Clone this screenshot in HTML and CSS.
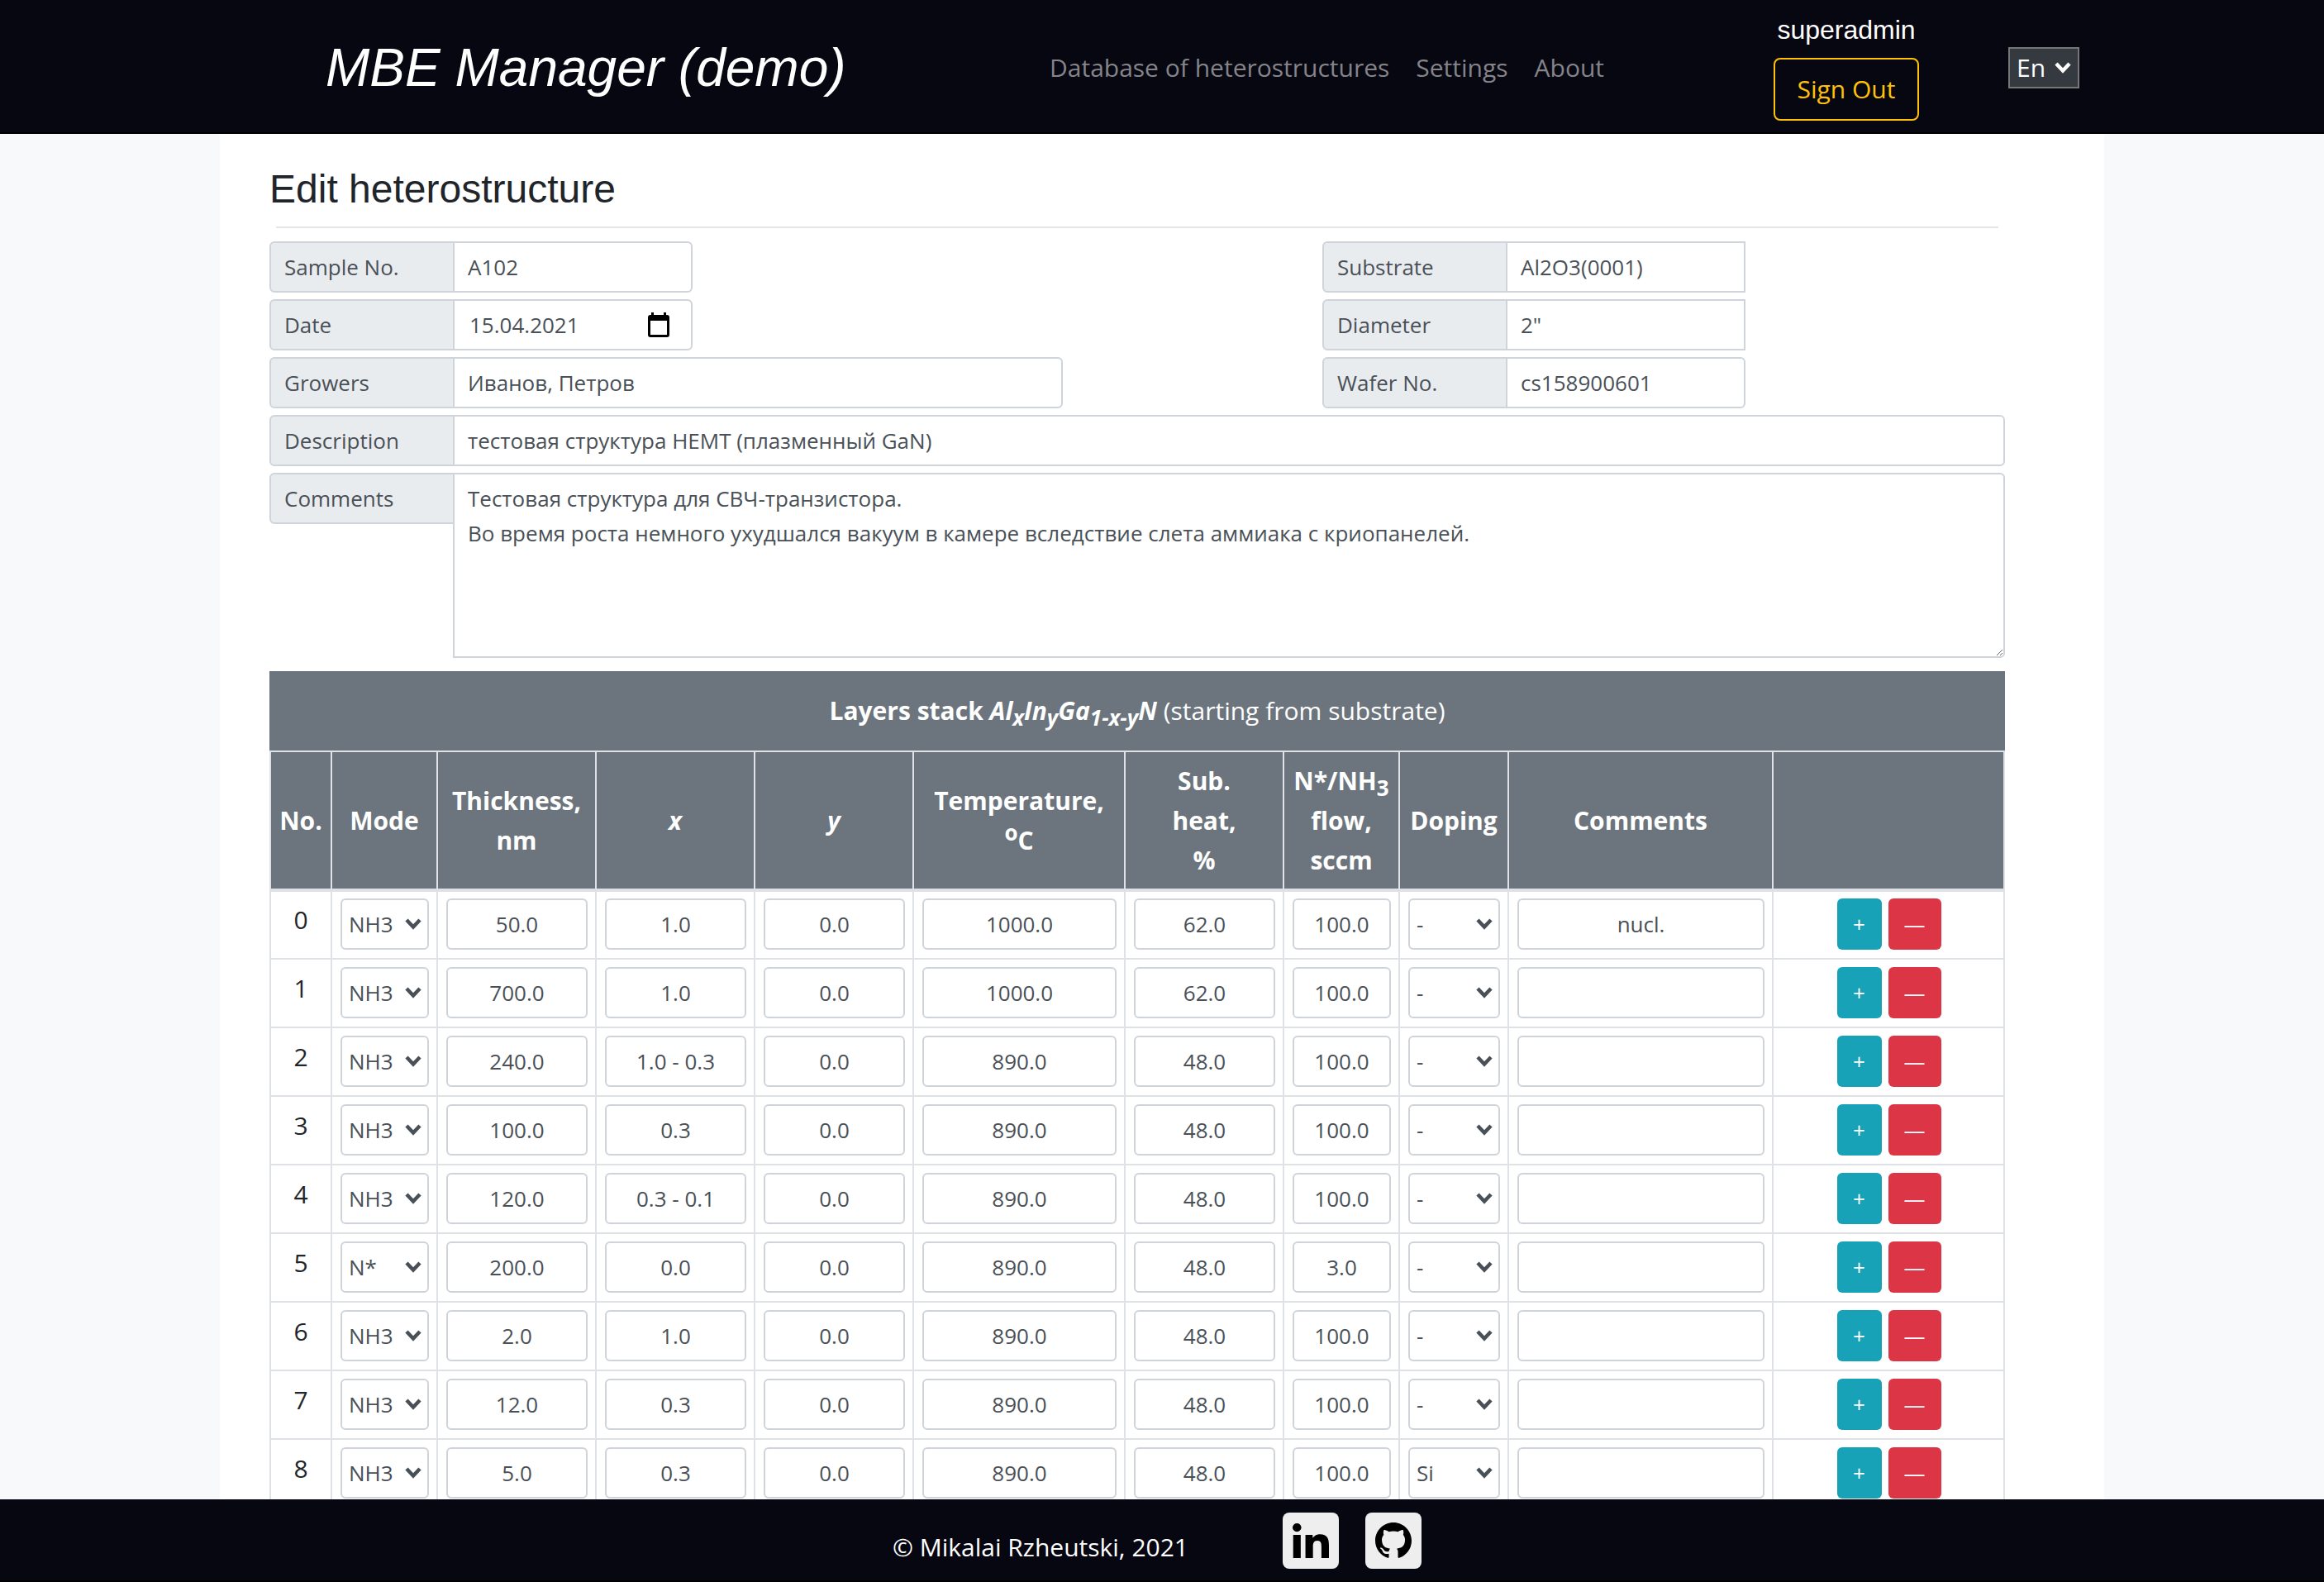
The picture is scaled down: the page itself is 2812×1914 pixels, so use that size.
FILE: index.html
```html
<!DOCTYPE html>
<html lang="en">
<head>
<meta charset="utf-8">
<title>MBE Manager (demo)</title>
<link rel="stylesheet" href="styles.css">
</head>
<body>
<header class="topbar">
  <div class="topbar-inner">
    <a class="brand" href="#">MBE Manager (demo)</a>
    <nav class="nav">
      <a href="#">Database of heterostructures</a>
      <a href="#">Settings</a>
      <a href="#">About</a>
    </nav>
    <div class="user">
      <span class="user-name">superadmin</span>
      <button class="sign-out" type="button">Sign Out</button>
    </div>
    <select class="lang" aria-label="Language"><option>En</option><option>Ru</option></select>
  </div>
</header>

<main class="page">
  <form class="sheet">
    <h1 class="title">Edit heterostructure</h1>
    <hr class="rule">

    <div class="fields">
      <div class="fields-left">
        <div class="group group-short"><label for="sample">Sample No.</label><input id="sample" type="text" value="A102"></div>
        <div class="group group-short">
          <label for="date">Date</label>
          <div class="date-box">
            <input id="date" type="text" value="15.04.2021">
            <button class="calendar" type="button" aria-label="Open calendar">
              <svg viewBox="0 0 26 30" width="26" height="30"><path fill-rule="evenodd" d="M4 0h3v3h12V0h3v3h1a3 3 0 0 1 3 3v21a3 3 0 0 1-3 3H3a3 3 0 0 1-3-3V6a3 3 0 0 1 3-3h1zM3 10v17h20V10z"/></svg>
            </button>
          </div>
        </div>
        <div class="group group-medium"><label for="growers">Growers</label><input id="growers" type="text" value="Иванов, Петров"></div>
      </div>
      <div class="fields-right">
        <div class="group group-short group-square"><label for="substrate">Substrate</label><input id="substrate" type="text" value="Al2O3(0001)"></div>
        <div class="group group-short group-square"><label for="diameter">Diameter</label><input id="diameter" type="text" value="2&quot;"></div>
        <div class="group group-short"><label for="wafer">Wafer No.</label><input id="wafer" type="text" value="cs158900601"></div>
      </div>
    </div>
    <div class="group"><label for="description">Description</label><input id="description" type="text" value="тестовая структура HEMT (плазменный GaN)"></div>
    <div class="group group-area"><label for="comments">Comments</label><textarea id="comments">Тестовая структура для СВЧ-транзистора.
Во время роста немного ухудшался вакуум в камере вследствие слета аммиака с криопанелей.</textarea></div>

    <table class="layers">
      <colgroup>
        <col class="c-no"><col class="c-mode"><col class="c-num"><col class="c-num"><col class="c-num"><col class="c-temp"><col class="c-num"><col class="c-flow"><col class="c-doping"><col class="c-comment"><col>
      </colgroup>
      <thead>
        <tr class="stack"><th colspan="11">Layers stack <i>Al<sub>x</sub>In<sub>y</sub>Ga<sub>1-x-y</sub>N</i> <span>(starting from substrate)</span></th></tr>
        <tr class="heads">
          <th>No.</th><th>Mode</th><th>Thickness,<br>nm</th><th><i>x</i></th><th><i>y</i></th><th>Temperature,<br><sup>o</sup>C</th><th>Sub.<br>heat,<br>%</th><th>N*/NH<sub>3</sub><br>flow,<br>sccm</th><th>Doping</th><th>Comments</th><th></th>
        </tr>
      </thead>
      <tbody>
        <tr>
          <td>0</td>
          <td><select aria-label="Mode"><option>NH3</option><option>N*</option></select></td>
          <td><input aria-label="Thickness" value="50.0"></td>
          <td><input aria-label="x" value="1.0"></td>
          <td><input aria-label="y" value="0.0"></td>
          <td><input aria-label="Temperature" value="1000.0"></td>
          <td><input aria-label="Substrate heat" value="62.0"></td>
          <td><input aria-label="Flow" value="100.0"></td>
          <td><select aria-label="Doping"><option>-</option><option>Si</option></select></td>
          <td><input aria-label="Comments" value="nucl."></td>
          <td><div class="actions"><button class="add" type="button">+</button><button class="remove" type="button">—</button></div></td>
        </tr>
        <tr>
          <td>1</td>
          <td><select aria-label="Mode"><option>NH3</option><option>N*</option></select></td>
          <td><input aria-label="Thickness" value="700.0"></td>
          <td><input aria-label="x" value="1.0"></td>
          <td><input aria-label="y" value="0.0"></td>
          <td><input aria-label="Temperature" value="1000.0"></td>
          <td><input aria-label="Substrate heat" value="62.0"></td>
          <td><input aria-label="Flow" value="100.0"></td>
          <td><select aria-label="Doping"><option>-</option><option>Si</option></select></td>
          <td><input aria-label="Comments" value=""></td>
          <td><div class="actions"><button class="add" type="button">+</button><button class="remove" type="button">—</button></div></td>
        </tr>
        <tr>
          <td>2</td>
          <td><select aria-label="Mode"><option>NH3</option><option>N*</option></select></td>
          <td><input aria-label="Thickness" value="240.0"></td>
          <td><input aria-label="x" value="1.0 - 0.3"></td>
          <td><input aria-label="y" value="0.0"></td>
          <td><input aria-label="Temperature" value="890.0"></td>
          <td><input aria-label="Substrate heat" value="48.0"></td>
          <td><input aria-label="Flow" value="100.0"></td>
          <td><select aria-label="Doping"><option>-</option><option>Si</option></select></td>
          <td><input aria-label="Comments" value=""></td>
          <td><div class="actions"><button class="add" type="button">+</button><button class="remove" type="button">—</button></div></td>
        </tr>
        <tr>
          <td>3</td>
          <td><select aria-label="Mode"><option>NH3</option><option>N*</option></select></td>
          <td><input aria-label="Thickness" value="100.0"></td>
          <td><input aria-label="x" value="0.3"></td>
          <td><input aria-label="y" value="0.0"></td>
          <td><input aria-label="Temperature" value="890.0"></td>
          <td><input aria-label="Substrate heat" value="48.0"></td>
          <td><input aria-label="Flow" value="100.0"></td>
          <td><select aria-label="Doping"><option>-</option><option>Si</option></select></td>
          <td><input aria-label="Comments" value=""></td>
          <td><div class="actions"><button class="add" type="button">+</button><button class="remove" type="button">—</button></div></td>
        </tr>
        <tr>
          <td>4</td>
          <td><select aria-label="Mode"><option>NH3</option><option>N*</option></select></td>
          <td><input aria-label="Thickness" value="120.0"></td>
          <td><input aria-label="x" value="0.3 - 0.1"></td>
          <td><input aria-label="y" value="0.0"></td>
          <td><input aria-label="Temperature" value="890.0"></td>
          <td><input aria-label="Substrate heat" value="48.0"></td>
          <td><input aria-label="Flow" value="100.0"></td>
          <td><select aria-label="Doping"><option>-</option><option>Si</option></select></td>
          <td><input aria-label="Comments" value=""></td>
          <td><div class="actions"><button class="add" type="button">+</button><button class="remove" type="button">—</button></div></td>
        </tr>
        <tr>
          <td>5</td>
          <td><select aria-label="Mode"><option>NH3</option><option selected>N*</option></select></td>
          <td><input aria-label="Thickness" value="200.0"></td>
          <td><input aria-label="x" value="0.0"></td>
          <td><input aria-label="y" value="0.0"></td>
          <td><input aria-label="Temperature" value="890.0"></td>
          <td><input aria-label="Substrate heat" value="48.0"></td>
          <td><input aria-label="Flow" value="3.0"></td>
          <td><select aria-label="Doping"><option>-</option><option>Si</option></select></td>
          <td><input aria-label="Comments" value=""></td>
          <td><div class="actions"><button class="add" type="button">+</button><button class="remove" type="button">—</button></div></td>
        </tr>
        <tr>
          <td>6</td>
          <td><select aria-label="Mode"><option>NH3</option><option>N*</option></select></td>
          <td><input aria-label="Thickness" value="2.0"></td>
          <td><input aria-label="x" value="1.0"></td>
          <td><input aria-label="y" value="0.0"></td>
          <td><input aria-label="Temperature" value="890.0"></td>
          <td><input aria-label="Substrate heat" value="48.0"></td>
          <td><input aria-label="Flow" value="100.0"></td>
          <td><select aria-label="Doping"><option>-</option><option>Si</option></select></td>
          <td><input aria-label="Comments" value=""></td>
          <td><div class="actions"><button class="add" type="button">+</button><button class="remove" type="button">—</button></div></td>
        </tr>
        <tr>
          <td>7</td>
          <td><select aria-label="Mode"><option>NH3</option><option>N*</option></select></td>
          <td><input aria-label="Thickness" value="12.0"></td>
          <td><input aria-label="x" value="0.3"></td>
          <td><input aria-label="y" value="0.0"></td>
          <td><input aria-label="Temperature" value="890.0"></td>
          <td><input aria-label="Substrate heat" value="48.0"></td>
          <td><input aria-label="Flow" value="100.0"></td>
          <td><select aria-label="Doping"><option>-</option><option>Si</option></select></td>
          <td><input aria-label="Comments" value=""></td>
          <td><div class="actions"><button class="add" type="button">+</button><button class="remove" type="button">—</button></div></td>
        </tr>
        <tr>
          <td>8</td>
          <td><select aria-label="Mode"><option>NH3</option><option>N*</option></select></td>
          <td><input aria-label="Thickness" value="5.0"></td>
          <td><input aria-label="x" value="0.3"></td>
          <td><input aria-label="y" value="0.0"></td>
          <td><input aria-label="Temperature" value="890.0"></td>
          <td><input aria-label="Substrate heat" value="48.0"></td>
          <td><input aria-label="Flow" value="100.0"></td>
          <td><select aria-label="Doping"><option>-</option><option selected>Si</option></select></td>
          <td><input aria-label="Comments" value=""></td>
          <td><div class="actions"><button class="add" type="button">+</button><button class="remove" type="button">—</button></div></td>
        </tr>
      </tbody>
    </table>
  </form>
</main>

<footer class="footer">
  <span class="copyright">© Mikalai Rzheutski, 2021</span>
  <div class="social">
    <a href="#" aria-label="LinkedIn"><svg viewBox="0 0 448 448" width="44" height="42" preserveAspectRatio="none"><path d="M100.28 448H7.4V148.9h92.88zM53.79 108.1C24.09 108.1 0 83.5 0 53.8a53.79 53.79 0 0 1 107.58 0c0 29.7-24.1 54.3-53.79 54.3zM447.9 448h-92.68V302.4c0-34.7-.7-79.2-48.29-79.2-48.29 0-55.69 37.7-55.69 76.7V448h-92.78V148.9h89.08v40.8h1.3c12.4-23.5 42.69-48.3 87.88-48.3 94 0 111.28 61.9 111.28 142.3V448z"/></svg></a>
    <a href="#" aria-label="GitHub"><svg viewBox="0 0 16 16" width="44" height="44"><path d="M8 0C3.58 0 0 3.58 0 8c0 3.54 2.29 6.53 5.47 7.59.4.07.55-.17.55-.38 0-.19-.01-.82-.01-1.49-2.01.37-2.53-.49-2.69-.94-.09-.23-.48-.94-.82-1.13-.28-.15-.68-.52-.01-.53.63-.01 1.08.58 1.23.82.72 1.21 1.87.87 2.33.66.07-.52.28-.87.51-1.07-1.78-.2-3.64-.89-3.64-3.95 0-.87.31-1.59.82-2.15-.08-.2-.36-1.02.08-2.12 0 0 .67-.21 2.2.82.64-.18 1.32-.27 2-.27s1.36.09 2 .27c1.53-1.04 2.2-.82 2.2-.82.44 1.1.16 1.92.08 2.12.51.56.82 1.27.82 2.15 0 3.07-1.87 3.75-3.65 3.95.29.25.54.73.54 1.48 0 1.07-.01 1.93-.01 2.2 0 .21.15.46.55.38A8.01 8.01 0 0 0 16 8c0-4.42-3.58-8-8-8z"/></svg></a>
  </div>
</footer>
</body>
</html>
```
FILE: styles.css
```css
* { box-sizing: border-box; }

body {
  margin: 0;
  height: 100vh;
  display: flex;
  flex-direction: column;
  background: #f8f9fb;
  color: #212529;
  font: 30px/48px "Open Sans", "Noto Sans", sans-serif;
}

input, select, textarea, button { font: inherit; margin: 0; }

/* Top bar */
.topbar {
  flex: none;
  background: #070712;
  border-bottom: 2px solid #000;
}
.topbar-inner {
  max-width: 2280px;
  height: 160px;
  margin: 0 auto;
  padding: 4px 30px 0 128px;
  display: grid;
  grid-template-columns: 876px 1fr 176px 194px;
  align-items: center;
}
.brand {
  color: #fff;
  text-decoration: none;
  font: italic 64px/96px "Liberation Sans", Arial, sans-serif;
}
.nav { display: flex; gap: 32px; }
.nav a { color: #848489; text-decoration: none; white-space: nowrap; }
.user {
  display: flex;
  flex-direction: column;
  align-items: center;
  gap: 10px;
  padding-bottom: 6px;
}
.user-name {
  color: #fff;
  font: 32px/48px "Liberation Sans", Arial, sans-serif;
}
.sign-out {
  width: 176px;
  height: 76px;
  padding: 0;
  color: #ffc107;
  background: transparent;
  border: 2px solid #ffc107;
  border-radius: 8px;
}
.lang {
  justify-self: end;
  width: 86px;
  height: 50px;
  padding: 0 8px;
  line-height: 46px;
  color: #fff;
  border: 2px solid #767676;
  border-radius: 0;
  appearance: none;
  background: #343a40 url("data:image/svg+xml,%3Csvg xmlns='http://www.w3.org/2000/svg' width='20' height='14'%3E%3Cpath d='M2 2l8 8.500 8-8.500' fill='none' stroke='%23fff' stroke-width='4.500'/%3E%3C/svg%3E") no-repeat right 8px top 16px;
}

/* Sheet */
.page {
  flex: 1;
  min-height: 0;
  overflow-y: auto;
  scrollbar-width: none;
}
.sheet {
  max-width: 2280px;
  margin: 0 auto;
  padding: 38px 120px 0 60px;
  background: #fff;
}
.title {
  margin: 0;
  font: 48px/58px "Liberation Sans", Arial, sans-serif;
}
.rule {
  margin: 16px 8px;
  border: 0;
  border-top: 2px solid #e5e5e5;
}
.fields { display: flex; }
.fields-left { width: 1274px; }
.fields-right { flex: 1; }

.group {
  display: flex;
  align-items: flex-start;
  margin-bottom: 8px;
  font-size: 26px;
  line-height: 42px;
  color: #495057;
}
.group-short { width: 512px; }
.group-medium { width: 960px; }
.group label {
  flex: none;
  width: 224px;
  height: 62px;
  padding: 8px 16px;
  background: #e9ecef;
  border: 2px solid #ced4da;
  border-radius: 6px 0 0 6px;
}
.group > input, .group textarea, .date-box {
  flex: 1;
  min-width: 0;
  height: 62px;
  margin-left: -2px;
  padding: 8px 16px;
  color: #495057;
  background: #fff;
  border: 2px solid #ced4da;
  border-radius: 0 6px 6px 0;
}
.group-square > input { border-radius: 0; }
.group textarea { height: 224px; resize: both; }
.group-area { margin-bottom: 16px; }
.date-box { display: flex; align-items: center; padding: 0 26px 0 18px; }
.date-box input {
  flex: 1;
  min-width: 0;
  padding: 0;
  border: 0;
  color: inherit;
  background: none;
}
.calendar { display: flex; padding: 0; border: 0; background: none; }

/* Layers table */
.layers {
  width: 100%;
  table-layout: fixed;
  border-collapse: collapse;
  text-align: center;
}
.c-no { width: 74px; }
.c-mode { width: 128px; }
.c-num { width: 192px; }
.c-temp { width: 256px; }
.c-flow { width: 140px; }
.c-doping { width: 132px; }
.c-comment { width: 320px; }

.layers th {
  padding: 11px 0 10px;
  color: #fff;
  background: #6c757d;
  border: 2px solid #dee2e6;
  white-space: nowrap;
}
.layers .stack th { padding: 22px 0 24px; border-color: #6c757d #6c757d #dee2e6; }
.layers .heads th { border-bottom-width: 4px; }
.stack span { font-weight: 400; }
.layers sub, .layers sup { font-size: 26px; line-height: 0; }
.layers td {
  padding: 9px 9px 10px 10px;
  border: 2px solid #dee2e6;
  vertical-align: top;
}
.layers td:first-child { padding: 11px 0 0; }
.layers tbody tr:first-child td { padding-top: 8px; }
.layers tbody tr:first-child td:first-child { padding-top: 10px; }
.layers input, .layers select {
  display: block;
  width: 100%;
  height: 62px;
  padding: 8px;
  font-size: 26px;
  line-height: 42px;
  color: #495057;
  background: #fff;
  border: 2px solid #ced4da;
  border-radius: 6px;
}
.layers input { text-align: center; }
.layers select {
  appearance: none;
  background: #fff url("data:image/svg+xml,%3Csvg xmlns='http://www.w3.org/2000/svg' width='20' height='14'%3E%3Cpath d='M2 2l8 8.500 8-8.500' fill='none' stroke='%23495057' stroke-width='4.500'/%3E%3C/svg%3E") no-repeat right 7px top 22px;
}
.actions { display: flex; justify-content: center; gap: 8px; }
.actions button {
  width: 54px;
  height: 62px;
  padding: 0;
  font-size: 26px;
  color: #fff;
  background: #17a2b8;
  border: 0;
  border-radius: 6px;
}
.actions .remove { width: 64px; background: #dc3545; }

/* Footer */
.footer {
  flex: none;
  height: 100px;
  padding: 2px 12px 0 0;
  display: flex;
  align-items: center;
  justify-content: center;
  gap: 114px;
  background: #070712;
  border-bottom: 2px solid #000;
}
.copyright { color: #fff; padding-top: 16px; }
.social { display: flex; gap: 32px; }
.social a {
  display: flex;
  align-items: center;
  justify-content: center;
  width: 68px;
  height: 68px;
  background: #eee;
  border-radius: 8px;
}
```
